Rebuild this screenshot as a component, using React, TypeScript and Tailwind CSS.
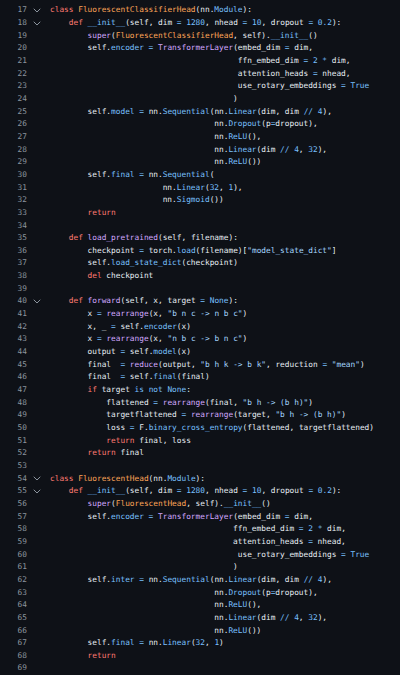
import React from "react";

const LINES: string[] = [
  "",
  "class FluorescentClassifierHead(nn.Module):",
  "    def __init__(self, dim = 1280, nhead = 10, dropout = 0.2):",
  "        super(FluorescentClassifierHead, self).__init__()",
  "        self.encoder = TransformerLayer(embed_dim = dim,",
  "                                        ffn_embed_dim = 2 * dim,",
  "                                        attention_heads = nhead,",
  "                                        use_rotary_embeddings = True",
  "                                       )",
  "        self.model = nn.Sequential(nn.Linear(dim, dim // 4),",
  "                                   nn.Dropout(p=dropout),",
  "                                   nn.ReLU(),",
  "                                   nn.Linear(dim // 4, 32),",
  "                                   nn.ReLU())",
  "        self.final = nn.Sequential(",
  "                        nn.Linear(32, 1),",
  "                        nn.Sigmoid())",
  "        return",
  "",
  "    def load_pretrained(self, filename):",
  '        checkpoint = torch.load(filename)["model_state_dict"]',
  "        self.load_state_dict(checkpoint)",
  "        del checkpoint",
  "",
  "    def forward(self, x, target = None):",
  '        x = rearrange(x, "b n c -> n b c")',
  "        x, _ = self.encoder(x)",
  '        x = rearrange(x, "n b c -> b n c")',
  "        output = self.model(x)",
  '        final  = reduce(output, "b h k -> b k", reduction = "mean")',
  "        final  = self.final(final)",
  "        if target is not None:",
  '            flattened = rearrange(final, "b h -> (b h)")',
  '            targetflattened = rearrange(target, "b h -> (b h)")',
  "            loss = F.binary_cross_entropy(flattened, targetflattened)",
  "            return final, loss",
  "        return final",
  "",
  "class FluorescentHead(nn.Module):",
  "    def __init__(self, dim = 1280, nhead = 10, dropout = 0.2):",
  "        super(FluorescentHead, self).__init__()",
  "        self.encoder = TransformerLayer(embed_dim = dim,",
  "                                       ffn_embed_dim = 2 * dim,",
  "                                       attention_heads = nhead,",
  "                                        use_rotary_embeddings = True",
  "                                       )",
  "        self.inter = nn.Sequential(nn.Linear(dim, dim // 4),",
  "                                   nn.Dropout(p=dropout),",
  "                                   nn.ReLU(),",
  "                                   nn.Linear(dim // 4, 32),",
  "                                   nn.ReLU())",
  "        self.final = nn.Linear(32, 1)",
  "        return",
  "",
];

const FOLD = new Set([17, 18, 40, 54, 55]);

const C = {
  text: "text-[#e6edf3]",
  kw: "text-[#ff7b72]",
  cls: "text-[#ffa657]",
  fn: "text-[#d2a8ff]",
  blue: "text-[#79c0ff]",
  str: "text-[#a5d6ff]",
};

const KW = new Set(["class", "def", "return", "del", "if"]);
const BLUE_WORDS = new Set(["is", "not", "True", "None", "False"]);
const CLASSES = new Set(["FluorescentClassifierHead", "FluorescentHead"]);

type Tok = { t: string; c: string };

function tokenize(line: string): Tok[] {
  const re = /("[^"]*")|(\d+(?:\.\d+)?)|([A-Za-z_][A-Za-z0-9_]*)|(->|\/\/|[=*])|(\s+)|(.)/g;
  const out: Tok[] = [];
  let m: RegExpExecArray | null;
  let prev = "";
  while ((m = re.exec(line)) !== null) {
    const s = m[0];
    let c = C.text;
    if (m[1]) c = C.str;
    else if (m[2]) c = C.blue;
    else if (m[3]) {
      const next = line.slice(re.lastIndex).match(/^\s*(.)/);
      const nc = next ? next[1] : "";
      if (KW.has(s)) c = C.kw;
      else if (BLUE_WORDS.has(s)) c = C.blue;
      else if (CLASSES.has(s) || prev === "class") c = C.cls;
      else if (s === "__init__") c = C.blue;
      else if (prev === "def") c = C.fn;
      else if (prev === ".") c = C.blue;
      else if (nc === "(" && s !== "self") c = C.fn;
      else c = C.text;
    } else if (m[4]) c = C.blue;
    out.push({ t: s, c });
    if (!m[5]) prev = s;
  }
  return out;
}

function Chevron() {
  return (
    <svg width="8" height="5" viewBox="0 0 8 5" className="block">
      <polyline
        points="1,1 4,4 7,1"
        fill="none"
        stroke="#8b949e"
        strokeWidth="1"
        strokeLinecap="round"
        strokeLinejoin="round"
      />
    </svg>
  );
}

export default function App() {
  return (
    <div
      className="w-[400px] h-[675px] overflow-hidden bg-[#0e1117]"
      style={{ fontFamily: '"DejaVu Sans Mono", "Liberation Mono", monospace' }}
    >
      <div className="mt-[-8.3px] text-[7.8px] leading-[12.67px]">
        {LINES.map((line, i) => {
          const n = 16 + i;
          return (
            <div key={n} className="flex h-[12.67px] items-center">
              <div className="w-[27px] shrink-0 text-right text-[#8b949e]">{n}</div>
              <div className="w-[23px] shrink-0 flex items-center pl-[6px]">
                {FOLD.has(n) ? <Chevron /> : null}
              </div>
              <div className="whitespace-pre">
                {tokenize(line).map((tk, j) => (
                  <span key={j} className={tk.c}>
                    {tk.t}
                  </span>
                ))}
              </div>
            </div>
          );
        })}
      </div>
    </div>
  );
}
